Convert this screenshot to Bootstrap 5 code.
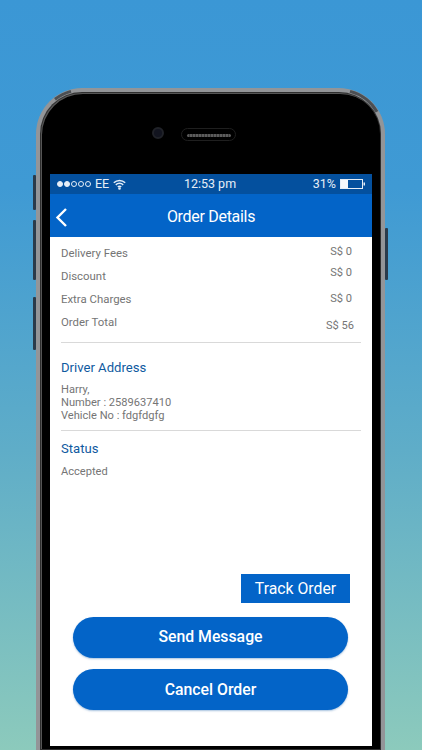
<!DOCTYPE html>
<html lang="en">
<head>
<meta charset="utf-8">
<title>Order Details</title>
<link href="https://cdn.jsdelivr.net/npm/bootstrap@5.3.0/dist/css/bootstrap.min.css" rel="stylesheet">
<style>
html,body{height:100%;margin:0}
body{width:422px;height:750px;overflow:hidden;font-family:Roboto,"Liberation Sans",sans-serif;background:linear-gradient(180deg,#3b97d5 0%,#3f9ad4 25%,#5fadc8 60%,#8ccabc 100%)}
.stage{height:750px;padding-top:88px;padding-left:36px;position:relative}
.handset{width:349px;height:662px;background:#000;border-radius:46px 46px 0 0;border:4px solid #939598;border-bottom:0;box-shadow:inset 0 0 0 1px #2e2e2e,inset 1px 1px 0 1px #555;padding:82px 9px 4px 10px;position:relative}
.sidekey{position:absolute;width:3px;background:#2a3b4b;border-radius:1px}
.k1{left:33px;top:175px;height:35px}
.k2{left:33px;top:220px;height:60px}
.k3{left:33px;top:297px;height:53px}
.k4{left:385px;top:228px;height:52px}
.bands{position:absolute;left:0;top:0;pointer-events:none}
.lens{position:absolute;left:112px;top:35px;width:12px;height:12px;border-radius:50%;background:#12141f;border:2px solid #202228}
.grille{position:absolute;left:141px;top:36px;width:55px;height:13px;border-radius:7px;border:1px solid #1f1f1f;display:flex;align-items:center;padding:2px 4px 0 5px}
.grille i{display:block;width:100%;height:3px;background:repeating-linear-gradient(90deg,#5c5c5c 0 2px,#3a3a3a 2px 3px);border-radius:2px}
.screen{height:572px;background:#fff;display:flex;flex-direction:column}
.statusline{height:20px;background:#04509e;color:#e6eef7;font-size:12.5px;padding:0 7px;position:relative}
.statusline .clock{position:absolute;left:0;right:2px;text-align:center;top:1px;line-height:18px}
.dots{gap:1px}
.dots b{display:block;width:6px;height:6px;border-radius:50%;border:1px solid #e6eef7}
.dots b.on{background:#e6eef7}
.appbar{height:43px;background:#0364c8;color:#fff;font-size:16px;letter-spacing:-.3px;position:relative;padding-top:3px}
.appbar .back{position:absolute;left:5px;top:14px}
.pane{flex:1;padding:0 11px;color:#757575;font-size:11.4px;line-height:13px;display:flex;flex-direction:column}
.feeline{height:23px}
.firstline{margin-top:2px}
.fine{font-size:11.1px}
.amt{font-size:11.1px;margin-right:9px}
.amtwide{margin-right:7px}
.up2{margin-top:-2px}.up4{margin-top:-4px}.up1{margin-top:-1px}.down3{margin-top:3px}
.rule{height:1px;background:#d9d9d9}
.ruleone{margin-top:11px}
.heading{color:#0f5a9f;font-size:13.1px;line-height:16px}
.headone{margin-top:17px}
.headtwo{margin-top:10px}
.addr{margin-top:7px}
.trackrow{padding-right:11px;padding-bottom:14px}
.trackbtn{width:109px;height:29px;background:#0364c8;color:#fff;font-size:15.8px;border:0;border-radius:0;padding:0}
.pillstack{gap:11px;padding-left:12px;padding-bottom:36px}
.pillbtn{height:41px;background:#0364c8;color:#fff;font-size:15.8px;font-weight:500;border:0;border-radius:21px;width:275px;padding:0;box-shadow:0 1px 2px rgba(3,80,160,.35)}
.pillhigh{padding-bottom:2px}
</style>
</head>
<body>
<div class="stage">
  <div class="sidekey k1"></div><div class="sidekey k2"></div><div class="sidekey k3"></div><div class="sidekey k4"></div>
  <div class="handset">
    <div class="lens"></div>
    <div class="grille"><i></i></div>
    <div class="screen">
      <div class="statusline d-flex align-items-center justify-content-between">
        <div class="d-flex align-items-center">
          <span class="dots d-flex"><b class="on"></b><b class="on"></b><b></b><b></b><b></b></span>
          <span class="ms-1">EE</span>
          <svg class="ms-1" width="13" height="11" viewBox="0 0 13 11" fill="none" stroke="#e6eef7" stroke-width="1.5"><path d="M.8 3.800a8 8 0 0 1 11.400 0"/><path d="M2.800 5.900a5.200 5.200 0 0 1 7.400 0"/><path d="M4.800 7.900a2.400 2.400 0 0 1 3.400 0"/><circle cx="6.500" cy="9.500" r=".6" fill="#e6eef7"/></svg>
        </div>
        <span class="clock">12:53 pm</span>
        <div class="d-flex align-items-center">
          <span>31%</span>
          <svg class="ms-1" width="25" height="10" viewBox="0 0 25 10"><rect x=".5" y=".5" width="22" height="9" fill="none" stroke="#e6eef7"/><rect x="1" y="1" width="7" height="8" fill="#f4f8fc"/><rect x="23.500" y="3.500" width="1.500" height="3" fill="#e6eef7"/></svg>
        </div>
      </div>
      <div class="appbar d-flex align-items-center justify-content-center">
        <svg class="back" width="13" height="19" viewBox="0 0 13 19" fill="none" stroke="#fff" stroke-width="2.4"><path d="M11 1 2.500 9.500 11 18"/></svg>
        <span>Order Details</span>
      </div>
      <div class="pane">
        <div class="d-flex justify-content-between feeline pt-2 firstline"><span>Delivery Fees</span><span class="amt up2">S$ 0</span></div>
        <div class="d-flex justify-content-between feeline pt-2"><span>Discount</span><span class="amt up4">S$ 0</span></div>
        <div class="d-flex justify-content-between feeline pt-2"><span>Extra Charges</span><span class="amt up1">S$ 0</span></div>
        <div class="d-flex justify-content-between feeline pt-2"><span>Order Total</span><span class="amt amtwide down3">S$ 56</span></div>
        <div class="rule ruleone"></div>
        <div class="heading headone">Driver Address</div>
        <div class="addr fine">Harry,<br>Number : 2589637410<br>Vehicle No : fdgfdgfg</div>
        <div class="rule mt-2"></div>
        <div class="heading headtwo">Status</div>
        <div class="mt-2 fine">Accepted</div>
        <div class="mt-auto d-flex justify-content-end trackrow"><button class="btn trackbtn">Track Order</button></div>
        <div class="d-flex flex-column align-items-start pillstack"><button class="btn pillbtn pillhigh">Send Message</button><button class="btn pillbtn">Cancel Order</button></div>
      </div>
    </div>
  </div>
  <svg class="bands" width="422" height="150" viewBox="0 0 422 150" fill="none" stroke="#4c4f53" stroke-width="3"><path d="M55 99.300A44 44 0 0 1 71 91.400"/><path d="M350 91.400A44 44 0 0 1 377 111.800"/></svg>
</div>
<script src="https://cdn.jsdelivr.net/npm/bootstrap@5.3.0/dist/js/bootstrap.bundle.min.js"></script>
</body>
</html>
